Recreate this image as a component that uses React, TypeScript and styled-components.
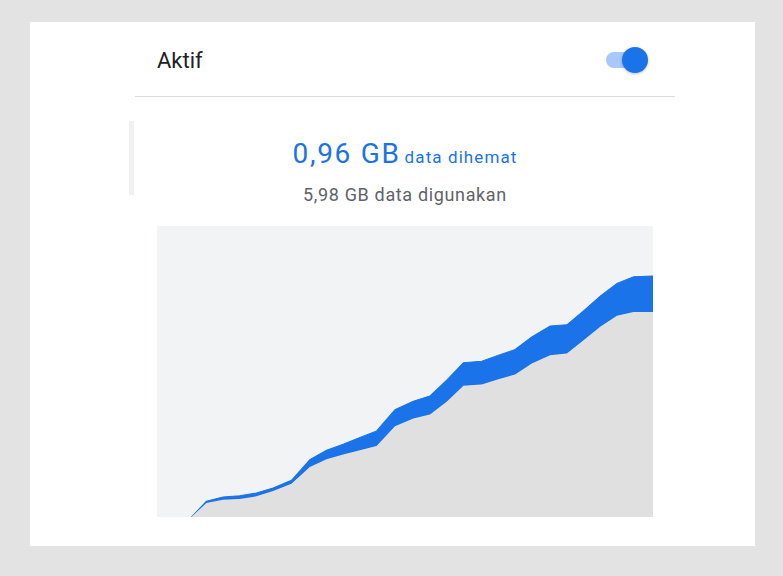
import React from "react";
import styled, { createGlobalStyle } from "styled-components";

const Global = createGlobalStyle`
  html, body { margin: 0; padding: 0; background: #e3e3e3; }
  body { font-family: Roboto, "Noto Sans", Arial, sans-serif; }
`;

const Page = styled.div`
  width: 783px;
  height: 576px;
  box-sizing: border-box;
  padding: 22px 28px 30px 30px;
`;

const Card = styled.div`
  background: #ffffff;
  width: 725px;
  height: 524px;
  box-sizing: border-box;
  padding-left: 105px;
`;

const Column = styled.div`
  width: 540px;
  display: flex;
  flex-direction: column;
`;

const Row = styled.div`
  height: 74px;
  display: flex;
  align-items: center;
  justify-content: space-between;
  padding: 0 27px 0 22px;
  border-bottom: 1px solid #dadce0;
`;

const Label = styled.span`
  font-size: 22px;
  color: #202124;
  margin-top: 3px;
`;

const Toggle = styled.div`
  position: relative;
  width: 42px;
  height: 26px;
  margin-top: 1px;
`;

const Track = styled.div`
  position: absolute;
  left: 0;
  top: 5px;
  width: 36px;
  height: 16px;
  border-radius: 8px;
  background: #a9c8fa;
`;

const Thumb = styled.div`
  position: absolute;
  right: 0;
  top: 0;
  width: 26px;
  height: 26px;
  border-radius: 50%;
  background: #1a73e8;
  box-shadow: 0 1px 3px rgba(0, 0, 0, 0.25);
`;

const Stats = styled.div`
  margin-top: 24px;
  margin-left: -6px;
  height: 74px;
  border-left: 5px solid #f1f1f1;
  display: flex;
  flex-direction: column;
  align-items: center;
  padding-left: 1px;
`;

const Saved = styled.div`
  color: #1a73e8;
  display: flex;
  align-items: baseline;
  gap: 4px;
  margin-top: 16px;
  line-height: 34px;
  white-space: nowrap;
`;

const Big = styled.span`
  font-size: 28px;
  letter-spacing: 1.7px;
`;

const Small = styled.span`
  font-size: 17px;
  letter-spacing: 1.1px;
`;

const Used = styled.div`
  color: #5f6368;
  font-size: 18px;
  letter-spacing: 0.65px;
  line-height: 20px;
  margin-top: 11px;
  white-space: nowrap;
`;

const Chart = styled.svg`
  display: block;
  margin-top: 31px;
  margin-left: 22px;
  width: 496px;
  height: 291px;
  background: #f1f3f4;
`;

const upper: [number, number][] = [
  [125, 890], [170, 843], [220, 830], [270, 826], [320, 818], [370, 803], [425, 780],
  [480, 718], [530, 690], [580, 672], [630, 652], [680, 632], [735, 568], [790, 543],
  [840, 527], [890, 480], [940, 428], [995, 423], [1045, 405], [1095, 388], [1145, 350],
  [1200, 318], [1250, 314], [1300, 272], [1350, 228], [1400, 190], [1450, 170], [1508, 168],
];
const lower: [number, number][] = [
  [125, 890], [170, 848], [220, 838], [270, 836], [320, 828], [370, 812], [425, 790],
  [480, 740], [530, 717], [580, 703], [630, 690], [680, 677], [735, 618], [790, 595],
  [840, 583], [890, 545], [940, 497], [995, 493], [1045, 477], [1095, 463], [1145, 430],
  [1200, 405], [1250, 400], [1300, 360], [1350, 320], [1400, 287], [1450, 276], [1508, 276],
];

const pts = (a: [number, number][]) => a.map(([x, y]) => `${x},${y}`).join(" ");

export default function App() {
  const band = pts(upper) + " " + pts([...lower].reverse());
  const grey = pts(lower) + " 1508,890 125,890";
  return (
    <>
      <Global />
      <Page>
        <Card>
          <Column>
            <Row>
              <Label>Aktif</Label>
              <Toggle>
                <Track />
                <Thumb />
              </Toggle>
            </Row>
            <Stats>
              <Saved>
                <Big>0,96 GB</Big>
                <Small>data dihemat</Small>
              </Saved>
              <Used>5,98 GB data digunakan</Used>
            </Stats>
            <Chart viewBox="22 18 1486 872" preserveAspectRatio="none">
              <polygon points={band} fill="#1a73e8" stroke="#1a73e8" strokeWidth="3" />
              <polygon points={grey} fill="#e0e0e0" />
            </Chart>
          </Column>
        </Card>
      </Page>
    </>
  );
}
